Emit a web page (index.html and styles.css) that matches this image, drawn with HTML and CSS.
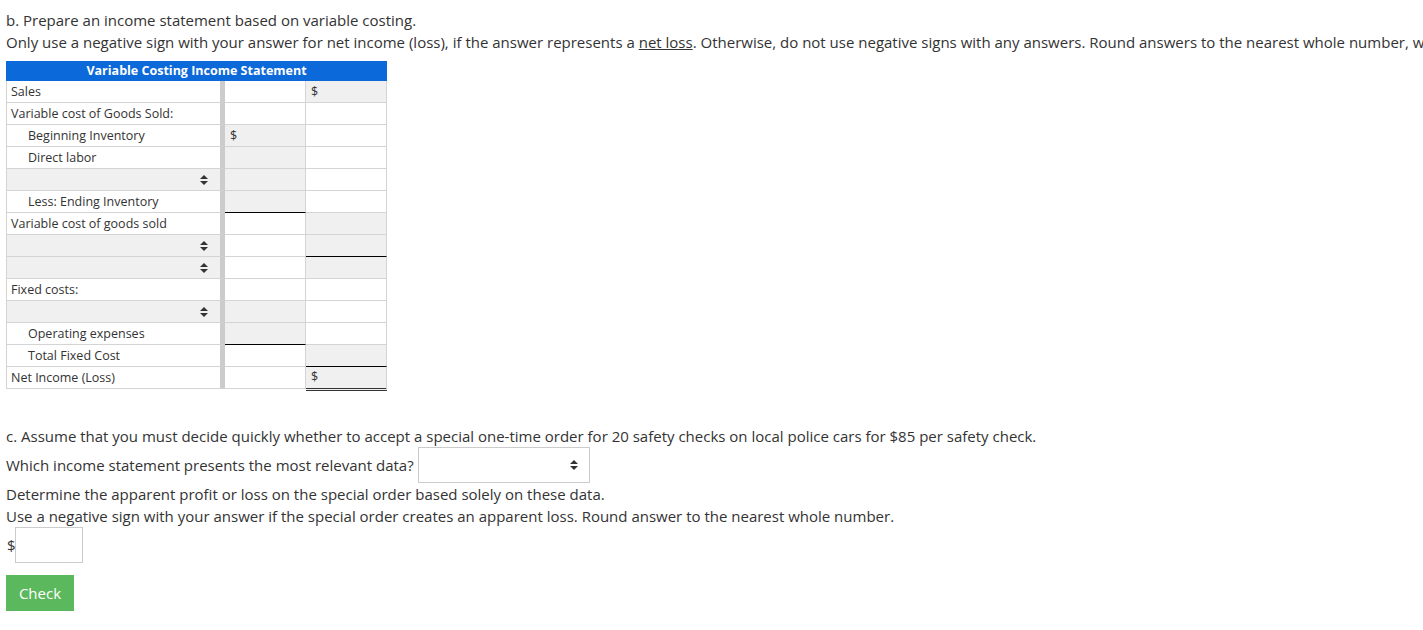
FILE: index.html
```html
<!DOCTYPE html>
<html lang="en">
<head>
<meta charset="utf-8">
<title>Variable Costing</title>
<link rel="stylesheet" href="styles.css">
</head>
<body>
<div class="page">
  <section class="part-b">
    <p class="line">b. Prepare an income statement based on variable costing.</p>
    <p class="line nowrap">Only use a negative sign with your answer for net income (loss), if the answer represents a <span class="u">net loss</span>. Otherwise, do not use negative signs with any answers. Round answers to the nearest whole number, w</p>

    <div class="stmt">
      <div class="stmt-head">Variable Costing Income Statement</div>

      <div class="row">
        <div class="c lab">Sales</div>
        <div class="c num"></div>
        <div class="c num gray">$</div>
      </div>
      <div class="row">
        <div class="c lab">Variable cost of Goods Sold:</div>
        <div class="c num"></div>
        <div class="c num"></div>
      </div>
      <div class="row">
        <div class="c lab ind">Beginning Inventory</div>
        <div class="c num gray">$</div>
        <div class="c num"></div>
      </div>
      <div class="row">
        <div class="c lab ind">Direct labor</div>
        <div class="c num gray"></div>
        <div class="c num"></div>
      </div>
      <div class="row">
        <div class="c lab sel"><svg class="sort" width="8" height="10" viewBox="0 0 8 10"><path d="M0 4 L4 0 L8 4 Z M0 6 L8 6 L4 10 Z"/></svg></div>
        <div class="c num gray"></div>
        <div class="c num"></div>
      </div>
      <div class="row">
        <div class="c lab ind">Less: Ending Inventory</div>
        <div class="c num gray line-b"></div>
        <div class="c num"></div>
      </div>
      <div class="row">
        <div class="c lab">Variable cost of goods sold</div>
        <div class="c num"></div>
        <div class="c num gray"></div>
      </div>
      <div class="row">
        <div class="c lab sel"><svg class="sort" width="8" height="10" viewBox="0 0 8 10"><path d="M0 4 L4 0 L8 4 Z M0 6 L8 6 L4 10 Z"/></svg></div>
        <div class="c num"></div>
        <div class="c num gray line-b"></div>
      </div>
      <div class="row">
        <div class="c lab sel"><svg class="sort" width="8" height="10" viewBox="0 0 8 10"><path d="M0 4 L4 0 L8 4 Z M0 6 L8 6 L4 10 Z"/></svg></div>
        <div class="c num"></div>
        <div class="c num gray"></div>
      </div>
      <div class="row">
        <div class="c lab">Fixed costs:</div>
        <div class="c num"></div>
        <div class="c num"></div>
      </div>
      <div class="row">
        <div class="c lab sel"><svg class="sort" width="8" height="10" viewBox="0 0 8 10"><path d="M0 4 L4 0 L8 4 Z M0 6 L8 6 L4 10 Z"/></svg></div>
        <div class="c num gray"></div>
        <div class="c num"></div>
      </div>
      <div class="row">
        <div class="c lab ind">Operating expenses</div>
        <div class="c num gray line-b"></div>
        <div class="c num"></div>
      </div>
      <div class="row">
        <div class="c lab ind">Total Fixed Cost</div>
        <div class="c num"></div>
        <div class="c num gray line-b"></div>
      </div>
      <div class="row">
        <div class="c lab">Net Income (Loss)</div>
        <div class="c num"></div>
        <div class="c num gray dbl">$</div>
      </div>
    </div>
  </section>

  <section class="part-c">
    <p class="line">c. Assume that you must decide quickly whether to accept a special one-time order for 20 safety checks on local police cars for $85 per safety check.</p>
    <div class="q-row">
      <span>Which income statement presents the most relevant data?</span>
      <div class="dropdown"><svg class="sort" width="8" height="10" viewBox="0 0 8 10"><path d="M0 4 L4 0 L8 4 Z M0 6 L8 6 L4 10 Z"/></svg></div>
    </div>
    <p class="line">Determine the apparent profit or loss on the special order based solely on these data.</p>
    <p class="line">Use a negative sign with your answer if the special order creates an apparent loss. Round answer to the nearest whole number.</p>
    <div class="ans-row">
      <span class="dollar">$</span>
      <div class="ans-box"></div>
    </div>
    <button class="check" type="button">Check</button>
  </section>
</div>
</body>
</html>
```
FILE: styles.css
```css
html, body {
  margin: 0;
  padding: 0;
  overflow: hidden;
  background: #fff;
}
body {
  font-family: "Open Sans", "Liberation Sans", sans-serif;
  color: #333;
  font-size: 15px;
}
.page {
  padding: 9px 6px 0 6px;
}
.line {
  margin: 0;
  line-height: 22px;
  font-size: 15px;
}
.nowrap {
  white-space: nowrap;
}
.u {
  text-decoration: underline;
}
.stmt {
  margin-top: 8px;
  width: 381px;
  font-size: 12.5px;
}
.stmt-head {
  height: 20px;
  line-height: 20px;
  background: #0b69d9;
  color: #fff;
  font-weight: 700;
  font-size: 12.5px;
  text-align: center;
}
.row {
  display: flex;
  height: 22px;
}
.c {
  box-sizing: border-box;
  height: 22px;
  border-bottom: 1px solid #d4d4d4;
  display: flex;
  align-items: center;
  line-height: 21px;
}
.lab {
  width: 219px;
  border-left: 1px solid #d4d4d4;
  border-right: 5px solid #cccccc;
  padding-left: 4px;
  background: #fff;
}
.ind {
  padding-left: 21px;
}
.sel {
  background: #f0f0f0;
  justify-content: flex-end;
  padding-right: 12px;
}
.num {
  width: 81px;
  border-right: 1px solid #d4d4d4;
  padding-left: 5px;
  background: #fff;
}
.gray {
  background: #f0f0f0;
}
.line-b {
  border-bottom: 1px solid #000;
}
.dbl {
  border-bottom: 3px double #333;
  height: 24px;
  align-self: flex-start;
  padding-bottom: 2px;
}
.sort {
  display: block;
  fill: #333;
}
.part-c {
  margin-top: 36px;
}
.q-row {
  display: flex;
  align-items: center;
  height: 36px;
}
.dropdown {
  box-sizing: border-box;
  width: 172px;
  height: 36px;
  margin-left: 4px;
  border: 1px solid #ccc;
  display: flex;
  align-items: center;
  justify-content: flex-end;
  padding-right: 11px;
}
.ans-row {
  display: flex;
  align-items: center;
  height: 36px;
}
.dollar {
  font-size: 15px;
  margin-left: 1px;
}
.ans-box {
  box-sizing: border-box;
  width: 68px;
  height: 36px;
  margin-left: -1px;
  border: 1px solid #ccc;
}
.check {
  display: block;
  margin-top: 12px;
  width: 68px;
  height: 36px;
  border: none;
  border-radius: 0;
  background: #5cb85c;
  color: #fff;
  font-family: "Open Sans", "Liberation Sans", sans-serif;
  font-size: 15px;
  padding: 0;
}
```
